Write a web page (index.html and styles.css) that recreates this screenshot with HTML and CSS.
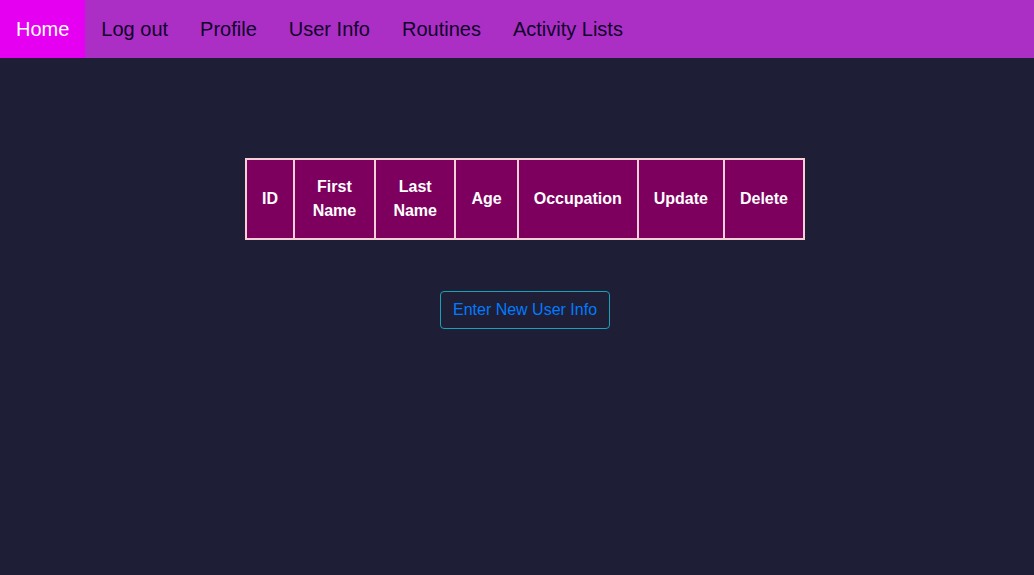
FILE: index.html
```html
<!DOCTYPE html>
<html>
<head>
<meta charset="utf-8">
<link rel="stylesheet" href="styles.css">
</head>
<body>
<nav class="topnav">
  <a class="nav-link active" href="#">Home</a>
  <a class="nav-link" href="#">Log out</a>
  <a class="nav-link" href="#">Profile</a>
  <a class="nav-link" href="#">User Info</a>
  <a class="nav-link" href="#">Routines</a>
  <a class="nav-link" href="#">Activity Lists</a>
</nav>
<main class="content">
  <table class="user-table">
    <thead>
      <tr>
        <th>ID</th>
        <th>First Name</th>
        <th>Last Name</th>
        <th>Age</th>
        <th>Occupation</th>
        <th>Update</th>
        <th>Delete</th>
      </tr>
    </thead>
  </table>
  <button class="btn-new">Enter New User Info</button>
</main>
</body>
</html>
```
FILE: styles.css
```css
html, body {
  margin: 0;
  padding: 0;
}
body {
  background: #1e1e36;
  font-family: "Liberation Sans", Arial, sans-serif;
  width: 1034px;
  height: 575px;
  overflow: hidden;
}
.topnav {
  display: flex;
  background: #ab2fc5;
  height: 58px;
}
.nav-link {
  display: block;
  padding: 17px 16px;
  font-size: 20px;
  line-height: 24px;
  color: #10002a;
  text-decoration: none;
}
.nav-link.active {
  background: #e600f2;
  color: #ffffff;
}
.content {
  display: flex;
  flex-direction: column;
  align-items: center;
  padding-left: 16px;
  padding-top: 100px;
}
.user-table {
  width: 560px;
  border-collapse: collapse;
  border: 2px solid #f6d0d6;
}
.user-table th {
  background: #7e005e;
  color: #ffffff;
  font-size: 16px;
  font-weight: bold;
  line-height: 24px;
  padding: 15px 15px;
  border: 2px solid #f6d0d6;
  text-align: center;
}
.btn-new {
  margin-top: 51px;
  background: transparent;
  border: 1px solid #17a2b8;
  border-radius: 4px;
  color: #007bff;
  font-family: "Liberation Sans", Arial, sans-serif;
  font-size: 16px;
  line-height: 24px;
  padding: 6px 12px;
}
```
